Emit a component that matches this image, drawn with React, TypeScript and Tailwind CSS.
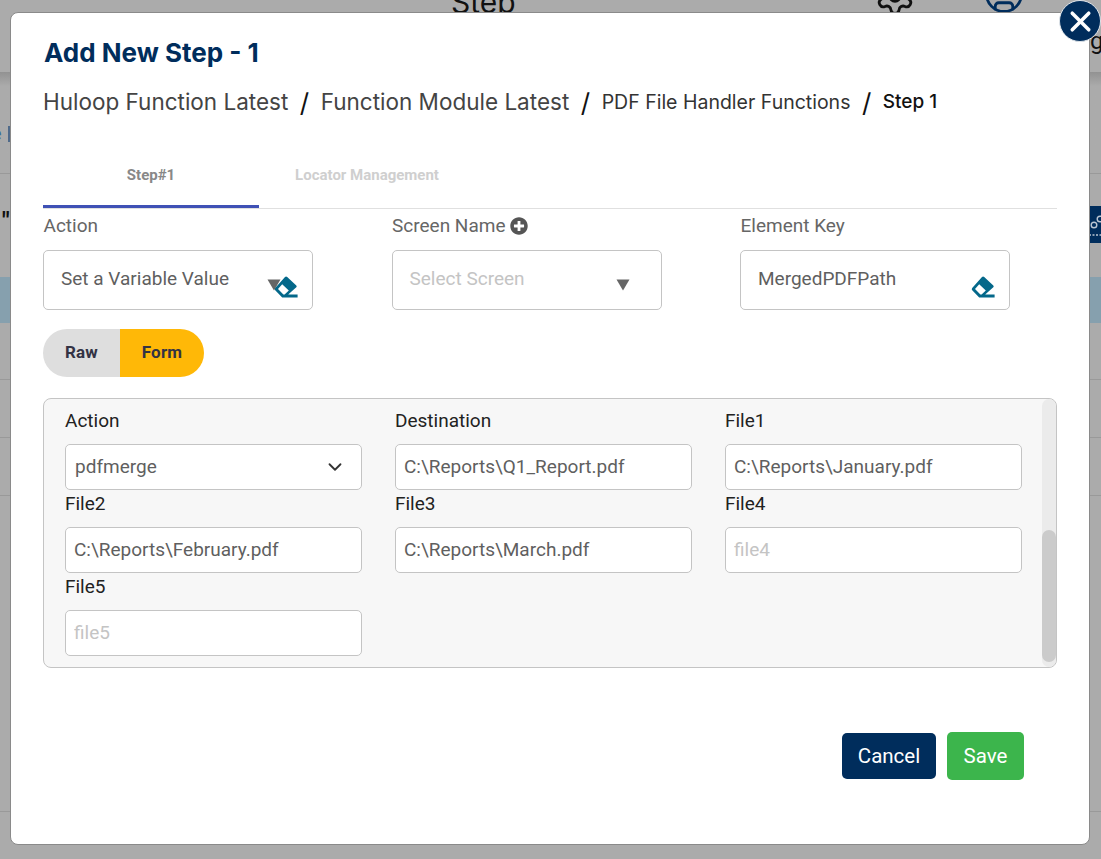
import React from "react";
import { ChevronDown, CircleUser, Settings, X } from "lucide-react";
import { FaPlusCircle } from "react-icons/fa";

function EraserIcon() {
  return (
    <svg viewBox="0 0 24 22" className="w-[24px] h-[22px]" fill="#04688a">
      <path
        fillRule="evenodd"
        d="M13.2 1 L22.3 9.4 Q23.2 10.3 22.3 11.3 L14.2 18.6 H23.6 V21.4 H8.2 L1.2 14.2 Q0.2 13 1.2 11.9 L11 1 Q12.1 0 13.2 1Z M8.2 8.2 L4 13 L9.4 18.6 H10.6 L14.8 14.6 Z"
      />
    </svg>
  );
}

function Triangle() {
  return (
    <svg viewBox="0 0 14 12" className="w-[14px] h-[12px]" fill="#666666">
      <path d="M0.5 0.5 H13.5 L7 11.5Z" />
    </svg>
  );
}

function TopField({
  label,
  value,
  placeholder,
  extra,
  children,
}: {
  label: string;
  value?: string;
  placeholder?: string;
  extra?: React.ReactNode;
  children?: React.ReactNode;
}) {
  return (
    <div className="w-[270px]">
      <div className="flex items-center gap-[5px] h-[24px] pl-[0.5px] text-[19px] leading-[24px] text-[#666666]">
        {label}
        {extra}
      </div>
      <div className="mt-[12px] h-[60px] pl-[17px] pr-[14px] flex items-center justify-between border border-[#c4c4c4] rounded-[5px] bg-white">
        <span className={`pb-[1px] text-[19px] ${value ? "text-[#5f5f5f]" : "text-[#c4c4c4]"}`}>
          {value || placeholder}
        </span>
        {children}
      </div>
    </div>
  );
}

function FormField({
  label,
  value,
  placeholder,
}: {
  label: string;
  value?: string;
  placeholder?: string;
}) {
  return (
    <div className="mb-[2px]">
      <div className="h-[24px] text-[19px] leading-[24px] text-[#222222]">{label}</div>
      <input
        readOnly
        defaultValue={value}
        placeholder={placeholder}
        className="mt-[11px] block w-[297px] h-[46px] px-[8px] pb-[2px] text-[19px] text-[#5f5f5f] placeholder:text-[#c4c4c4] bg-white border border-[#c4c4c4] rounded-[5px] outline-none"
      />
    </div>
  );
}

function BackgroundPage() {
  return (
    <div className="flex flex-col h-full text-[#111111]">
      <div className="h-[72px] shrink-0 flex items-start overflow-hidden">
        <span className="shrink-0 w-[63px] ml-[451px] -mt-[18px] text-[30px] leading-[40px] font-['Inter',sans-serif]">Step</span>
        <Settings size={42} strokeWidth={1.6} className="shrink-0 ml-[360px] -mt-[25px] text-[#111111]" />
        <CircleUser size={42} strokeWidth={1.6} className="shrink-0 ml-[67px] -mt-[27px] text-[#002d5c]" />
        <span className="shrink-0 ml-[65px] mt-[26px] text-[24px] leading-[30px]">g</span>
      </div>
      <div className="h-[102px] shrink-0 border-b border-[#999999] bg-gradient-to-b from-[#929292] to-[#ababab] to-[14%] flex items-center pt-[22px] gap-[6px]">
        <span className="text-[#3c6e9a] text-[18px] -ml-[8px]">e</span>
        <span className="w-[3px] h-[16px] bg-[#4f6a8a]" />
      </div>
      <div className="h-[103px] shrink-0 flex items-start justify-between">
        <span className="ml-[2px] mt-[35px] text-[24px] leading-[24px] font-bold">"</span>
        <div className="mt-[32px] w-[12px] h-[37px] bg-[#002d5c] overflow-hidden">
          <svg viewBox="0 0 12 37" className="w-[12px] h-[37px]" fill="none" stroke="#b9c5d2" strokeWidth="1.4">
            <circle cx="5" cy="19" r="2.8" />
            <circle cx="11" cy="13" r="2.8" />
            <path d="M0 29H2M3.5 29H5.5M7 29H9M10.5 29H12" />
          </svg>
        </div>
      </div>
      <div className="h-[46px] shrink-0 bg-[#86a0ae]" />
      <div className="h-[57px] shrink-0 border-b border-[#999999]" />
      <div className="h-[58px] shrink-0 border-b border-[#999999]" />
      <div className="h-[58px] shrink-0 border-b border-[#999999]" />
      <div className="h-[316px] shrink-0 border-b border-[#999999]" />
    </div>
  );
}

export default function App() {
  return (
    <div className="relative w-[1101px] h-[859px] overflow-hidden bg-[#ababab] font-['Roboto',sans-serif]">
      <BackgroundPage />

      <div className="absolute left-[10px] top-[12px] w-[1080px] h-[833px] bg-white border border-[#8a8a8a] rounded-[8px] pl-[32px] pr-[32px] pt-[25px]">
        <button className="absolute -top-[13px] -right-[12px] w-[42px] h-[42px] rounded-full bg-[#002d5c] border border-[#dfe5ea] flex items-center justify-center">
          <X size={33} strokeWidth={2.6} className="text-white" />
        </button>

        <h1 className="h-[30px] pl-[1px] text-[26px] leading-[30px] font-bold text-[#002d5c] font-['Inter',sans-serif]">
          Add New Step - 1
        </h1>

        <div className="mt-[18px] h-[32px] flex items-center font-['Inter',sans-serif]">
          <span className="text-[22.5px] text-[#444444]">Huloop Function Latest</span>
          <span className="mx-[11.5px] text-[26px] text-[#111111]">/</span>
          <span className="text-[22.5px] text-[#444444]">Function Module Latest</span>
          <span className="mx-[11.5px] text-[26px] text-[#111111]">/</span>
          <span className="pt-[1px] text-[19.5px] text-[#333333]">PDF File Handler Functions</span>
          <span className="mx-[11.5px] text-[26px] text-[#111111]">/</span>
          <span className="pt-[1px] text-[19px] font-medium text-[#111111]">Step 1</span>
        </div>

        <div className="mt-[27px] h-[64px] flex border-b border-[#e0e0e0]">
          <div className="w-[216px] h-[63px] flex items-center justify-center border-b-[3px] border-[#3f51b5] text-[15px] font-bold text-[#888888]">
            Step#1
          </div>
          <div className="w-[216px] h-[63px] pb-[3px] flex items-center justify-center text-[15px] font-bold text-[#cfcfcf]">
            Locator Management
          </div>
        </div>

        <div className="mt-[5px] flex gap-[78.5px]">
          <TopField label="Action" value="Set a Variable Value">
            <div className="flex items-start mt-[14px]">
              <div className="mt-[3px]">
                <Triangle />
              </div>
              <div className="-ml-[7px] relative">
                <EraserIcon />
              </div>
            </div>
          </TopField>
          <TopField
            label="Screen Name"
            placeholder="Select Screen"
            extra={<FaPlusCircle size={18} className="text-[#555555]" />}
          >
            <div className="mr-[17px] mt-[9px]">
              <Triangle />
            </div>
          </TopField>
          <TopField label="Element Key" value="MergedPDFPath">
            <div className="mt-[14px]">
              <EraserIcon />
            </div>
          </TopField>
        </div>

        <div className="mt-[19px] flex w-[161px] h-[48px] text-[17px] tracking-[0.2px] font-bold text-[#333344]">
          <div className="w-[77px] flex items-center justify-center bg-[#dedede] rounded-l-full">Raw</div>
          <div className="w-[84px] flex items-center justify-center bg-[#ffb807] rounded-r-full">Form</div>
        </div>

        <div className="mt-[21px] flex w-[1014px] h-[270px] bg-[#f7f7f7] border border-[#c4c4c4] rounded-[8px] overflow-hidden">
          <div className="flex-1 pl-[21px] pt-[10px]">
            <div className="grid grid-cols-[repeat(3,297px)] gap-x-[33px]">
              <div className="mb-[2px]">
                <div className="h-[24px] text-[19px] leading-[24px] text-[#222222]">Action</div>
                <div className="mt-[11px] w-[297px] h-[46px] pl-[9px] pr-[15px] flex items-center justify-between text-[19px] text-[#5f5f5f] bg-white border border-[#c4c4c4] rounded-[5px]">
                  <span>pdfmerge</span>
                  <ChevronDown size={22} strokeWidth={2} className="text-[#333333]" />
                </div>
              </div>
              <FormField label="Destination" value="C:\Reports\Q1_Report.pdf" />
              <FormField label="File1" value="C:\Reports\January.pdf" />
              <FormField label="File2" value="C:\Reports\February.pdf" />
              <FormField label="File3" value="C:\Reports\March.pdf" />
              <FormField label="File4" placeholder="file4" />
              <FormField label="File5" placeholder="file5" />
            </div>
          </div>
          <div className="w-[14px] h-full bg-[#ebebeb] rounded-[7px] pt-[131px] pb-[5px]">
            <div className="h-full bg-[#cbcbcb] rounded-[7px]" />
          </div>
        </div>

        <div className="mt-[64px] mr-[33px] flex justify-end items-center gap-[11px] text-[20.5px] text-white">
          <button className="w-[94px] h-[46px] pt-[1px] bg-[#002d5c] rounded-[5px]">Cancel</button>
          <button className="w-[77px] h-[48px] pt-[1px] bg-[#3cb54c] rounded-[5px]">Save</button>
        </div>
      </div>
    </div>
  );
}
